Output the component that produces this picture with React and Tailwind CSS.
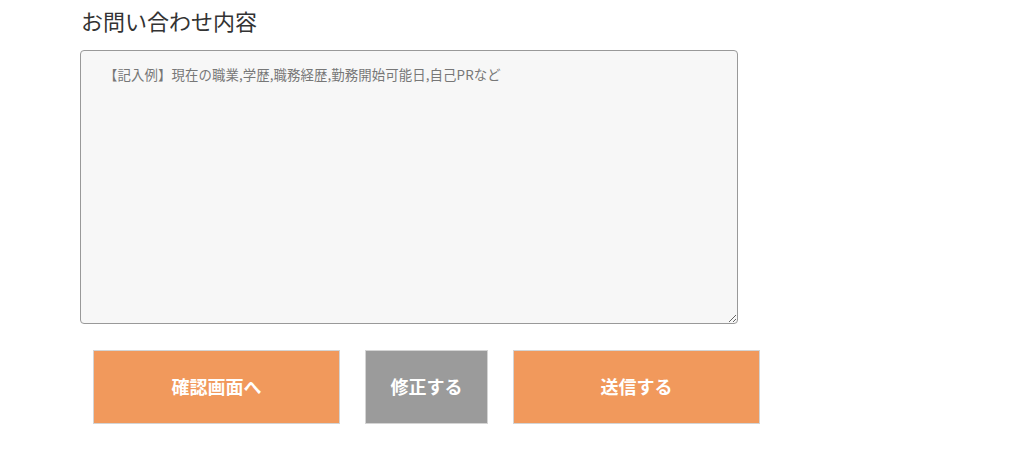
export default function App() {
  const font = { fontFamily: '"Noto Sans CJK JP", "Noto Sans", sans-serif' }
  return (
    <div className="w-[1024px] h-[456px] bg-white overflow-hidden" style={font}>
      <div className="pl-[80px] pt-[4px]">
        <h2 className="text-[22px] leading-[32px] text-[#333] pl-[1px] font-normal">お問い合わせ内容</h2>
        <textarea
          className="mt-[14px] block w-[658px] h-[274px] bg-[#f7f7f7] border border-[#999] rounded-[4px] pl-[23px] pr-4 pt-[13px] text-[13.4px] leading-[20px] tracking-[0.1px] text-[#333] placeholder:text-[#777] outline-none"
          placeholder="【記入例】現在の職業,学歴,職務経歴,勤務開始可能日,自己PRなど"
        />
        <div className="flex gap-[25px] mt-[26px] pl-[13px]">
          <button className="w-[247px] h-[74px] pb-[2px] bg-[#f1995c] border border-[#d4d4d4] text-white font-bold text-[18px]">確認画面へ</button>
          <button className="w-[123px] h-[74px] pb-[2px] bg-[#9b9b9b] border border-[#d4d4d4] text-white font-bold text-[18px]">修正する</button>
          <button className="w-[247px] h-[74px] pb-[2px] bg-[#f1995c] border border-[#d4d4d4] text-white font-bold text-[18px]">送信する</button>
        </div>
      </div>
    </div>
  )
}
